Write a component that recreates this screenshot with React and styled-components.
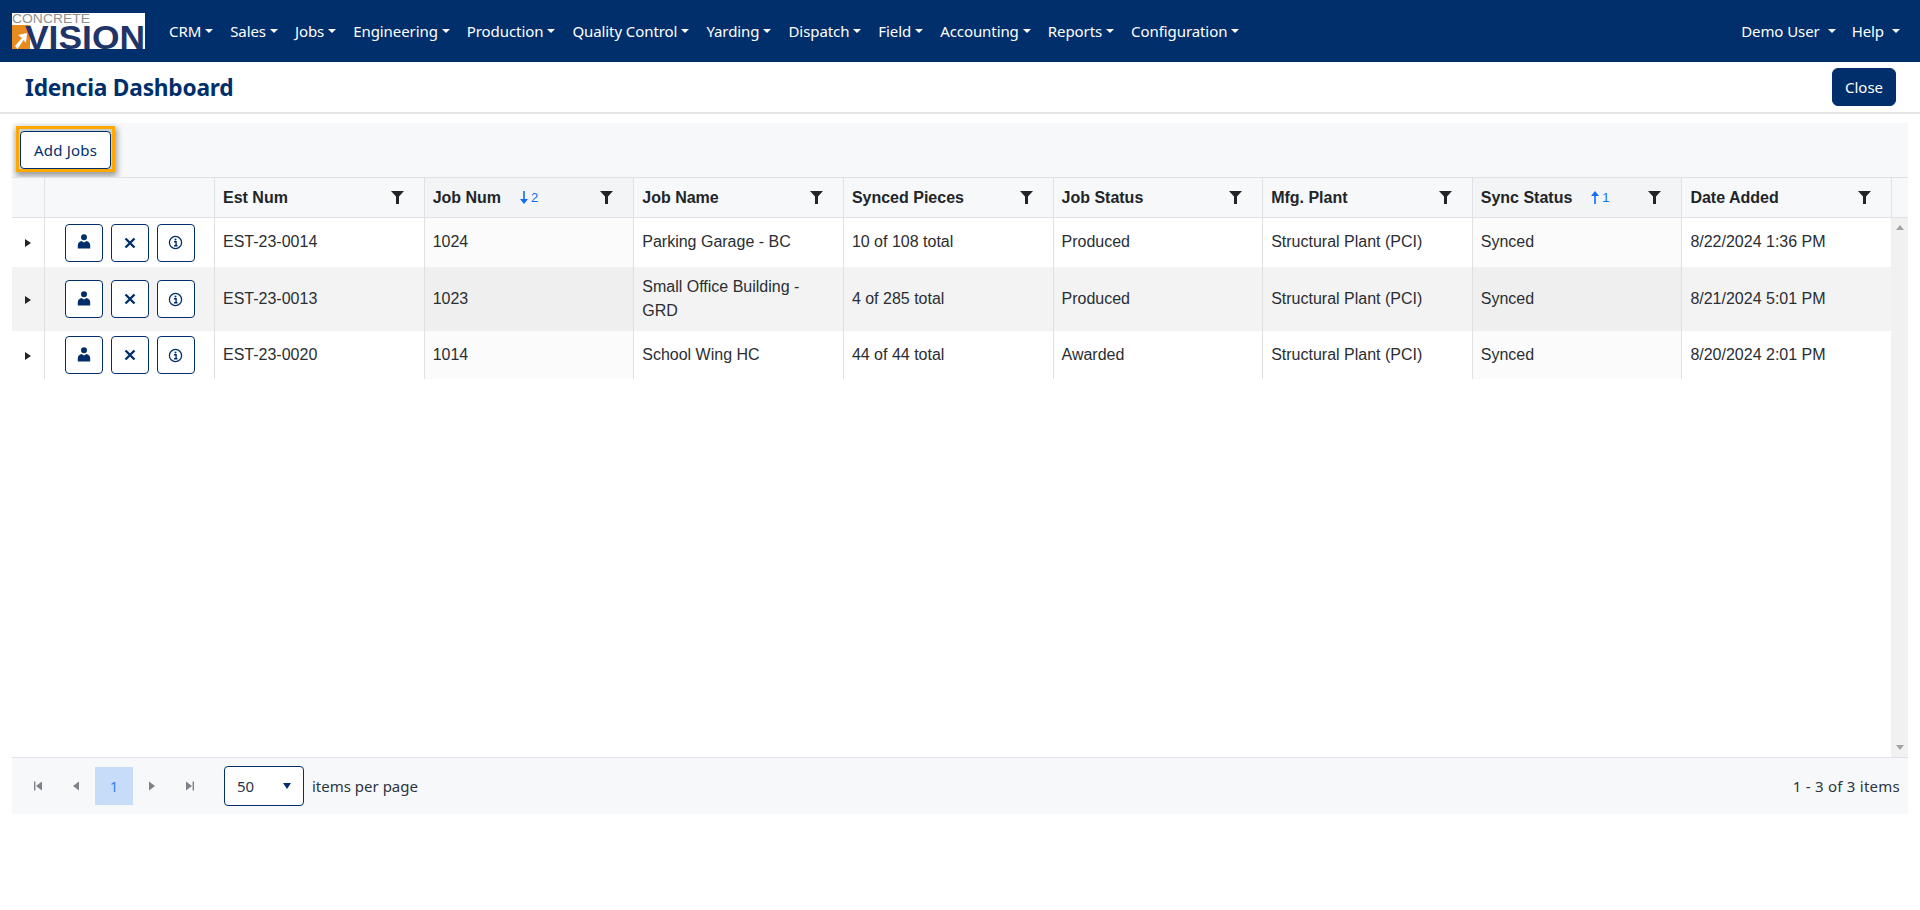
import React from 'react'
import styled, { createGlobalStyle } from 'styled-components'

const navy = '#002f6c'
const uiFont = '"Noto Sans", "Open Sans", sans-serif'
const gridFont = '"Liberation Sans", Arial, sans-serif'

const GlobalStyle = createGlobalStyle`
  html, body { margin: 0; padding: 0; background: #fff; }
  body { font-family: ${uiFont}; color: #212529; }
`

const Page = styled.div`
  width: 1920px;
  height: 910px;
  overflow: hidden;
  display: flex;
  flex-direction: column;
`

const Navbar = styled.nav`
  height: 62px;
  background: ${navy};
  display: flex;
  align-items: center;
  padding: 0 20px 0 12px;
  flex: none;
`

const LogoSvg = styled.svg`
  width: 133px;
  height: 36px;
  margin-right: 24px;
  flex: none;
  overflow: visible;
`

const NavItem = styled.a`
  display: flex;
  align-items: center;
  color: #fff;
  font-size: 15px;
  letter-spacing: -0.08px;
  margin-right: ${p => p.$gap ?? 17}px;
  white-space: nowrap;
  &::after {
    content: '';
    margin-left: ${p => p.$caretGap || 4}px;
    border-top: 4.5px solid #fff;
    border-left: 4.5px solid transparent;
    border-right: 4.5px solid transparent;
  }
`

const Spacer = styled.div`
  flex: 1;
`

const TitleBar = styled.div`
  height: 52px;
  flex: none;
  display: flex;
  align-items: center;
  justify-content: space-between;
  padding: 0 24px 0 25px;
  border-bottom: 2px solid #e5e5e5;
  box-sizing: border-box;
`

const Title = styled.h1`
  margin: 0;
  font-size: 22.7px;
  font-weight: 700;
  color: ${navy};
  letter-spacing: -0.2px;
`

const CloseButton = styled.button`
  width: 64px;
  height: 38px;
  background: ${navy};
  color: #fff;
  border: 1px solid ${navy};
  border-radius: 6px;
  font-family: ${uiFont};
  font-size: 15px;
  padding: 0;
`

const Panel = styled.section`
  margin: 9px 12px 0;
  display: flex;
  flex-direction: column;
`

const Toolbar = styled.div`
  height: 54px;
  background: #f7f8fa;
  display: flex;
  align-items: center;
  padding-left: 4px;
  box-sizing: border-box;
`

const FocusRing = styled.span`
  display: flex;
  margin-top: -2px;
  padding: 2px 1px 0;
  background: #cfd0d2;
  border: 3px solid #ffa800;
  box-shadow: 1px 3px 6px 1px rgba(0, 0, 0, 0.38);
`

const AddButton = styled.button`
  width: 91px;
  height: 38px;
  background: #fff;
  color: ${navy};
  border: 1px solid ${navy};
  border-radius: 4px;
  font-family: ${uiFont};
  font-size: 15px;
  letter-spacing: 0.2px;
  padding: 0;
`

const HeaderRow = styled.div`
  display: grid;
  grid-template-columns: 33px 170px repeat(8, 209.625px) 1fr;
  height: 41px;
  background: #f7f8fa;
  border-top: 1px solid #dee2e6;
  border-bottom: 1px solid #dee2e6;
  box-sizing: border-box;
  font-family: ${gridFont};
`

const HeaderCell = styled.div`
  display: flex;
  align-items: center;
  padding: 0 9px 0 8px;
  border-right: 1px solid #dee2e6;
  font-size: 16px;
  font-weight: 700;
  color: #212529;
  background: ${p => (p.$sorted ? '#f3f4f6' : 'transparent')};
  &:last-child { border-right: 0; }
`

const SortMark = styled.span`
  display: inline-flex;
  align-items: center;
  margin-left: 19px;
  color: #0d6efd;
  font-size: 13px;
  font-weight: 400;
  gap: 3px;
`

const FilterIcon = styled.svg`
  width: 13px;
  height: 13px;
  margin-left: auto;
  margin-right: 11px;
  fill: #212529;
`

const Body = styled.div`
  height: 539px;
  position: relative;
  font-family: ${gridFont};
  font-size: 16px;
  color: #2a2e33;
`

const Rows = styled.div`
  margin-right: 16px;
`

const Row = styled.div`
  display: grid;
  grid-template-columns: 33px 170px repeat(8, 209.625px);
  height: ${p => p.$height}px;
  background: ${p => (p.$alt ? '#f3f3f3' : '#fff')};
`

const Cell = styled.div`
  display: flex;
  align-items: center;
  padding: 0 8px 1px;
  border-right: 1px solid #e0e0e0;
  line-height: 24px;
  background: ${p => (p.$sorted ? (p.$alt ? '#efefef' : '#fbfbfb') : 'transparent')};
  &:last-child { border-right: 0; }
`

const ExpandCell = styled(Cell)`
  justify-content: center;
  padding: 0;
  &::before {
    content: '';
    border-left: 6px solid #212529;
    border-top: 4px solid transparent;
    border-bottom: 4px solid transparent;
    margin-top: 1px;
  }
`

const ActionCell = styled(Cell)`
  justify-content: center;
  gap: 8px;
  padding: 0;
`

const IconButton = styled.button`
  width: 38px;
  height: 38px;
  background: #fff;
  border: 1px solid ${navy};
  border-radius: 4px;
  display: flex;
  align-items: center;
  justify-content: center;
  padding: 0;
  color: ${navy};
`

const Scrollbar = styled.div`
  position: absolute;
  right: 0;
  top: 0;
  bottom: 0;
  width: 17px;
  background: #f1f1f1;
  display: flex;
  flex-direction: column;
  justify-content: space-between;
  align-items: center;
  padding: 7px 0;
  box-sizing: border-box;
`

const ScrollArrow = styled.span`
  border-left: 4px solid transparent;
  border-right: 4px solid transparent;
  ${p => (p.$down ? 'border-top' : 'border-bottom')}: 5px solid #a3a3a3;
`

const Footer = styled.div`
  height: 57px;
  background: #f7f8fa;
  border-top: 1px solid #dee2e6;
  box-sizing: border-box;
  display: flex;
  align-items: center;
  padding: 0 8px 0 7px;
  font-size: 15px;
  color: #2b3441;
`

const ItemCount = styled.span`
  letter-spacing: 0.25px;
`

const PagerButton = styled.span`
  width: 38px;
  height: 38px;
  display: flex;
  align-items: center;
  justify-content: center;
  color: ${p => (p.$active ? '#3b82f0' : '#7d8288')};
  background: ${p => (p.$active ? '#c7dcf9' : 'transparent')};
  font-size: 15px;
`

const PageSelect = styled.div`
  width: 80px;
  height: 40px;
  margin-left: 15px;
  margin-right: 8px;
  background: #fff;
  border: 1px solid ${navy};
  border-radius: 4px;
  box-sizing: border-box;
  display: flex;
  align-items: center;
  justify-content: space-between;
  padding: 0 12px 0 12px;
  &::after {
    content: '';
    border-top: 6px solid ${navy};
    border-left: 4px solid transparent;
    border-right: 4px solid transparent;
  }
`

const menu = [
  'CRM', 'Sales', 'Jobs', 'Engineering', 'Production', 'Quality Control', 'Yarding',
  'Dispatch', 'Field', 'Accounting', 'Reports', 'Configuration',
]

const columns = [
  { title: 'Est Num' },
  { title: 'Job Num', sort: 'down', order: 2 },
  { title: 'Job Name' },
  { title: 'Synced Pieces' },
  { title: 'Job Status' },
  { title: 'Mfg. Plant' },
  { title: 'Sync Status', sort: 'up', order: 1 },
  { title: 'Date Added' },
]

const rows = [
  { height: 49, cells: ['EST-23-0014', '1024', 'Parking Garage - BC', '10 of 108 total', 'Produced', 'Structural Plant (PCI)', 'Synced', '8/22/2024 1:36 PM'] },
  { height: 64, alt: true, cells: ['EST-23-0013', '1023', 'Small Office Building - GRD', '4 of 285 total', 'Produced', 'Structural Plant (PCI)', 'Synced', '8/21/2024 5:01 PM'] },
  { height: 48, cells: ['EST-23-0020', '1014', 'School Wing HC', '44 of 44 total', 'Awarded', 'Structural Plant (PCI)', 'Synced', '8/20/2024 2:01 PM'] },
]

const Logo = () => (
  <LogoSvg viewBox="0 0 133 36">
    <rect width="133" height="36" fill="#fff" />
    <text x="0" y="10" fontFamily="Liberation Sans" fontSize="13" fill="#8f8f8f" textLength="78" lengthAdjust="spacingAndGlyphs">CONCRETE</text>
    <rect x="0" y="12" width="18" height="24" fill="#e88a1e" />
    <path d="M3 33 L10 25 L6 22 L15 20 L14 30 L11.5 27 L5.5 36 Z" fill="#fff" />
    <text x="13" y="36" fontFamily="Liberation Sans" fontWeight="700" fontSize="34" fill="#1f3468" textLength="120" lengthAdjust="spacingAndGlyphs">VISION</text>
  </LogoSvg>
)

const PersonIcon = () => (
  <svg width="14" height="15" viewBox="0 0 14 15" fill="currentColor" style={{ marginTop: -2 }}>
    <circle cx="7" cy="3.2" r="3" />
    <path d="M.8 14.5 V11 C.8 8.5 3 7.5 4.5 7 L7 8.5 L9.5 7 C11 7.5 13.2 8.5 13.2 11 V14.5 Z" />
  </svg>
)

const CloseIcon = () => (
  <svg width="12" height="12" viewBox="0 0 12 12" stroke="currentColor" strokeWidth="2.4">
    <path d="M1.5 1.5 L10.5 10.5 M10.5 1.5 L1.5 10.5" />
  </svg>
)

const InfoIcon = () => (
  <svg width="15" height="15" viewBox="0 0 15 15" fill="none" stroke="currentColor">
    <circle cx="7.5" cy="7.5" r="6.1" strokeWidth="1.3" />
    <circle cx="7.5" cy="4.5" r="1" fill="currentColor" stroke="none" />
    <path d="M6 6.8 H8.1 V10.6 M6 10.8 H9.5" strokeWidth="1.4" />
  </svg>
)

const SortArrow = ({ up }) => (
  <svg width="8" height="13" viewBox="0 0 8 13" fill="currentColor">
    {up
      ? <path d="M4 0 L8 5 H4.8 V13 H3.2 V5 H0 Z" />
      : <path d="M4 13 L8 8 H4.8 V0 H3.2 V8 H0 Z" />}
  </svg>
)

const PagerIcon = ({ kind }) => {
  const shapes = {
    first: <><path d="M10 1.5 V10.5 L4 6 Z" /><rect x="2" y="1.5" width="1.4" height="9" /></>,
    prev: <path d="M9 1.5 V10.5 L3 6 Z" />,
    next: <path d="M3 1.5 V10.5 L9 6 Z" />,
    last: <><path d="M2 1.5 V10.5 L8 6 Z" /><rect x="8.6" y="1.5" width="1.4" height="9" /></>,
  }
  return <svg width="12" height="12" viewBox="0 0 12 12" fill="currentColor">{shapes[kind]}</svg>
}

const App = () => (
  <Page>
    <GlobalStyle />
    <Navbar>
      <Logo />
      {menu.map(name => <NavItem key={name}>{name}</NavItem>)}
      <Spacer />
      <NavItem $caretGap={8} $gap={16}>Demo User</NavItem>
      <NavItem $caretGap={8} $gap={0}>Help</NavItem>
    </Navbar>
    <TitleBar>
      <Title>Idencia Dashboard</Title>
      <CloseButton>Close</CloseButton>
    </TitleBar>
    <Panel>
      <Toolbar>
        <FocusRing>
          <AddButton>Add Jobs</AddButton>
        </FocusRing>
      </Toolbar>
      <HeaderRow>
        <HeaderCell />
        <HeaderCell />
        {columns.map(col => (
          <HeaderCell key={col.title} $sorted={!!col.sort}>
            {col.title}
            {col.sort && <SortMark><SortArrow up={col.sort === 'up'} />{col.order}</SortMark>}
            <FilterIcon viewBox="0 0 13 13"><path d="M0 0 H13 L8 5.5 V13 H5 V5.5 Z" /></FilterIcon>
          </HeaderCell>
        ))}
        <HeaderCell />
      </HeaderRow>
      <Body>
        <Rows>
          {rows.map(row => (
            <Row key={row.cells[0]} $height={row.height} $alt={row.alt}>
              <ExpandCell />
              <ActionCell>
                <IconButton><PersonIcon /></IconButton>
                <IconButton><CloseIcon /></IconButton>
                <IconButton><InfoIcon /></IconButton>
              </ActionCell>
              {row.cells.map((text, i) => (
                <Cell key={i} $sorted={i === 1 || i === 6} $alt={row.alt}>{text}</Cell>
              ))}
            </Row>
          ))}
        </Rows>
        <Scrollbar>
          <ScrollArrow />
          <ScrollArrow $down />
        </Scrollbar>
      </Body>
      <Footer>
        <PagerButton><PagerIcon kind="first" /></PagerButton>
        <PagerButton><PagerIcon kind="prev" /></PagerButton>
        <PagerButton $active>1</PagerButton>
        <PagerButton><PagerIcon kind="next" /></PagerButton>
        <PagerButton><PagerIcon kind="last" /></PagerButton>
        <PageSelect>50</PageSelect>
        items per page
        <Spacer />
        <ItemCount>1 - 3 of 3 items</ItemCount>
      </Footer>
    </Panel>
  </Page>
)

export default App
